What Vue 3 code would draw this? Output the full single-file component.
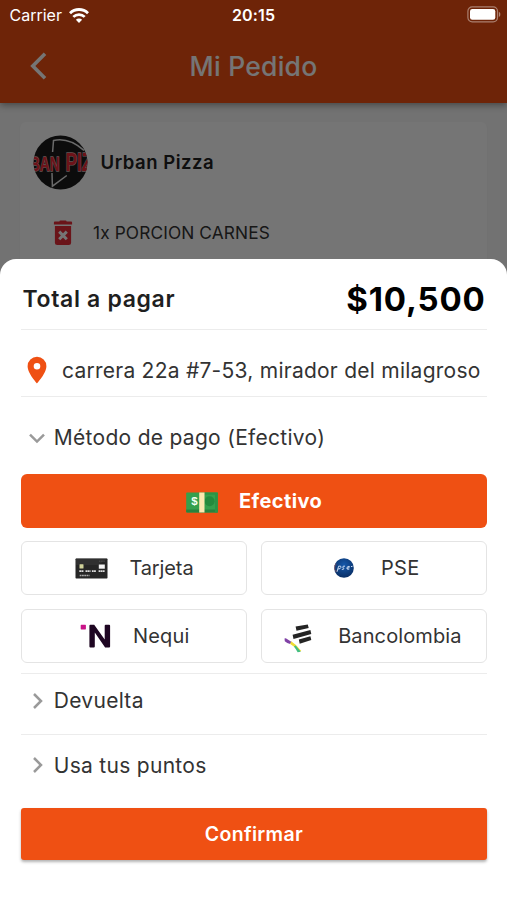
<script setup>
import { ref } from 'vue'

const methods = [
  { id: 'efectivo', label: 'Efectivo' },
  { id: 'tarjeta', label: 'Tarjeta' },
  { id: 'pse', label: 'PSE' },
  { id: 'nequi', label: 'Nequi' },
  { id: 'bancolombia', label: 'Bancolombia' }
]
const selected = ref('efectivo')
</script>

<template>
  <div class="screen">
    <header class="header">
      <div class="status">
        <div class="carrier">
          <span>Carrier</span>
          <svg class="wifi" viewBox="0 0 20 15" width="20" height="15">
            <path d="M10 14.9 6.9 11.7a4.4 4.4 0 0 1 6.2 0z" fill="#fff" />
            <path d="M4.3 8.9a8.1 8.1 0 0 1 11.4 0" fill="none" stroke="#fff" stroke-width="2.7" />
            <path d="M1 5.2a12.8 12.8 0 0 1 18 0" fill="none" stroke="#fff" stroke-width="2.8" />
          </svg>
        </div>
        <span class="time">20:15</span>
        <svg class="battery" viewBox="0 0 34 17" width="34" height="17">
          <rect x=".9" y=".9" width="29.6" height="15" rx="4.3" fill="none" stroke="#fff" stroke-opacity=".42" stroke-width="1.2" />
          <rect x="3" y="3" width="25.3" height="10.8" rx="2.3" fill="#fff" />
          <path d="M31.9 5.8c1.9.7 1.9 4.5 0 5.2z" fill="#fff" fill-opacity=".45" />
        </svg>
      </div>
      <div class="navbar">
        <svg class="back" viewBox="0 0 18 28" width="18" height="28">
          <path d="M16 1.8 3.8 14 16 26.2" fill="none" stroke="#fff" stroke-width="3.6" />
        </svg>
        <h1>Mi Pedido</h1>
        <span class="spacer"></span>
      </div>
    </header>

    <main class="content">
      <section class="order">
        <div class="shop">
          <svg class="logo" viewBox="0 0 55 55" width="55" height="55">
            <defs><clipPath id="disc"><circle cx="27.5" cy="27.5" r="27" /></clipPath></defs>
            <g clip-path="url(#disc)">
              <rect width="55" height="55" fill="#1c1c1c" />
              <path d="M19.6 17 20.5 5.6q15-3.6 30.5 9.8M19 38l.4 13.2L33.8 40.5" fill="none" stroke="#e6e6e6" stroke-width="1.5" />
              <text x="-3" y="35.6" textLength="29.5" lengthAdjust="spacingAndGlyphs" class="brand">BAN</text>
              <text x="32.4" y="35.6" textLength="27" lengthAdjust="spacingAndGlyphs" class="brand big">PIZ</text>
            </g>
          </svg>
          <h2>Urban Pizza</h2>
        </div>
        <div class="item">
          <svg viewBox="0 0 20 26" width="20" height="26">
            <path d="M6.4 1.6Q6.4.6 7.4.6h5.2q1 0 1 1h4.6q.9 0 .9 1v1.8H.9V2.6q0-1 .9-1z" fill="#e62c38" />
            <path d="M1.9 6h16.2v16.5q0 2.5-2.5 2.5H4.4q-2.5 0-2.5-2.5z" fill="#e62c38" />
            <path d="m6.2 11.6 7.6 7.6m0-7.6-7.6 7.6" stroke="#fff" stroke-width="3" />
          </svg>
          <span>1x PORCION CARNES</span>
        </div>
      </section>
    </main>

    <div class="scrim">
      <section class="sheet">
        <div class="total">
          <h3>Total a pagar</h3>
          <strong>$10,500</strong>
        </div>
        <div class="address">
          <svg viewBox="0 0 20 28" width="20" height="28">
            <path fill-rule="evenodd" d="M10 .8A9.4 9.4 0 0 0 .6 10.2C.6 17.2 10 27.4 10 27.4s9.4-10.2 9.4-17.2A9.4 9.4 0 0 0 10 .8zm0 6.1a3.3 3.3 0 1 1 0 6.6 3.3 3.3 0 0 1 0-6.6z" fill="#ef5013" />
          </svg>
          <span>carrera 22a #7-53, mirador del milagroso</span>
        </div>
        <div class="fold open">
          <svg viewBox="0 0 18 18" width="18" height="18"><path d="m2 5.6 7 7 7-7" fill="none" stroke="#9a9a9a" stroke-width="2.5" /></svg>
          <span>Método de pago (Efectivo)</span>
        </div>
        <div class="methods">
          <button
            v-for="m in methods"
            :key="m.id"
            :class="['method', m.id, { active: m.id === selected }]"
            @click="selected = m.id"
          >
            <svg v-if="m.id === 'efectivo'" class="cash" viewBox="0 0 32 21" width="32" height="21">
              <rect x=".2" y=".5" width="31.6" height="20" rx=".8" fill="#35a04c" />
              <path d="M.2 17.5h31.6v2.2q0 .8-.8.8H1q-.8 0-.8-.8z" fill="#28823e" />
              <circle cx="23.6" cy="9.3" r="5" fill="#248b3d" />
              <path d="M18.5.5h13.3v2.3H18.5zM29 .5h2.8v20H29z" fill="#2c9345" />
              <rect x="13.2" y=".5" width="5.3" height="20" fill="#fbe8b0" />
              <text x="5.2" y="13.4" class="dollar">$</text>
            </svg>
            <svg v-else-if="m.id === 'tarjeta'" viewBox="0 0 33 21" width="33" height="21">
              <rect x=".5" y=".5" width="32" height="20" rx=".7" fill="#262626" />
              <path d="M1 .8h31L23 7H1z" fill="#303030" />
              <rect x="4.5" y="6.3" width="4" height="4.2" rx=".5" fill="#cfd29a" />
              <rect x="23.8" y="6.5" width="6" height="4.2" fill="#f4f4f4" />
              <path d="M24 3.2h6" stroke="#5a5a5a" stroke-width=".8" stroke-dasharray="1.4 .8" />
              <path d="M4.3 13.1h4.5m1.7 0h5m1.4 0h4.3m2.4 0h6" stroke="#dedede" stroke-width="1.8" stroke-dasharray="1.8 .35" />
              <path d="M4.7 17.6h9.8" stroke="#aaa" stroke-width="1.5" stroke-dasharray="1.8 .5" />
            </svg>
            <svg v-else-if="m.id === 'pse'" viewBox="0 0 20 20" width="20" height="20">
              <defs><radialGradient id="globe" cx=".5" cy=".35" r=".7"><stop offset="0" stop-color="#1659ab" /><stop offset="1" stop-color="#082b60" /></radialGradient></defs>
              <circle cx="10" cy="10" r="9.8" fill="url(#globe)" />
              <path d="m3 13.8 1.6-5.6q2.8-.7 2.4 1.1-.4 1.8-3 1.7m7-2.8q-2.4-.5-2.2.9.1 1.1 1.1 1.3.5 1.1-2.1 1m5-1q3.2-.4 2.6-2-2-.6-2.5 1.6 0 2.1 2.5 1m1.6-2.4 1.5-.3" fill="none" stroke="#c9daf2" stroke-width="1" />
              <path d="M.7 7v5M1.8 5.5v2M1.9 12v2" stroke="#8a5b65" stroke-width=".8" />
            </svg>
            <svg v-else-if="m.id === 'nequi'" viewBox="0 0 31 24" width="31" height="24">
              <rect x=".7" y=".8" width="5.2" height="4.6" rx=".6" fill="#c91488" />
              <path d="M9.4 1.8q0-1 1-1h3.8l10.5 14.7V1.8q0-1 1-1h3.4q1 0 1 1v20.6q0 1-1 1h-4L14.8 8.6v13.8q0 1-1 1h-3.4q-1 0-1-1z" fill="#1e0622" />
            </svg>
            <svg v-else class="bars" viewBox="0 0 28 29" width="28" height="29">
              <path d="m11.6 2.5 12.2-2 .9 3.6-12.2 2.6zM8.6 10.8 26.4 6l.9 3.9-17.8 5.2zM14.8 15.6l11.6-3.4.9 3.9-11.6 3.7z" fill="#242424" />
              <path d="m.5 14.6 1.3-.4 5.9 3.7-1.5 2.2q-3.2-1-5.4-2.9z" fill="#8042a6" />
              <path d="M7.1 17.3q5.7 3.4 10.2 9.8l-2.4.6q-3.5-4.7-8.7-7.6z" fill="#f0dc32" />
              <path d="m9.9 22.4 1.8-.8 5.1 6.2-3.2.5q-1.3-3-3.7-5.9z" fill="#42be82" />
            </svg>
            <span>{{ m.label }}</span>
          </button>
        </div>
        <div class="fold returned">
          <svg viewBox="0 0 18 18" width="18" height="18"><path d="m6 2 7 7-7 7" fill="none" stroke="#9a9a9a" stroke-width="2.5" /></svg>
          <span>Devuelta</span>
        </div>
        <div class="fold points">
          <svg viewBox="0 0 18 18" width="18" height="18"><path d="m6 2 7 7-7 7" fill="none" stroke="#9a9a9a" stroke-width="2.5" /></svg>
          <span>Usa tus puntos</span>
        </div>
        <button class="confirm">Confirmar</button>
      </section>
    </div>
  </div>
</template>

<style>
body {
  margin: 0;
}
</style>

<style scoped>
* {
  box-sizing: border-box;
}
.screen {
  position: relative;
  width: 507px;
  height: 900px;
  overflow: hidden;
  background: #f8f8f8;
  font-family: Inter, "Liberation Sans", sans-serif;
  white-space: nowrap;
}
h1, h2, h3 {
  margin: 0;
}
svg {
  display: block;
  flex: none;
}
button {
  font-family: inherit;
  padding: 0;
}
.header {
  height: 103px;
  background: #ef5013;
  box-shadow: 0 2px 7px rgba(0, 0, 0, 0.4);
}
.status {
  position: relative;
  z-index: 2;
  display: grid;
  grid-template-columns: 1fr auto 1fr;
  align-items: center;
  height: 30px;
  padding: 0 8px;
  color: #fff;
  font-size: 16px;
}
.carrier {
  display: flex;
  align-items: center;
  gap: 7px;
  padding-left: 1.5px;
}
.time {
  font-weight: 600;
  letter-spacing: 0.15px;
}
.battery {
  justify-self: end;
  margin: -2px -1.5px 0 0;
}
.navbar {
  display: flex;
  align-items: center;
  justify-content: space-between;
  height: 71.5px;
  padding: 0 30px 0 29px;
  color: #fff;
}
.navbar h1 {
  padding-left: 1px;
  font-size: 26.5px;
  font-weight: 500;
  letter-spacing: 0.25px;
}
.spacer {
  width: 18px;
}
.content {
  padding: 19px 20px 0;
}
.order {
  height: 170px;
  padding: 13px 12.5px;
  background: #fff;
  border-radius: 6px;
  box-shadow: 0 1px 1px rgba(0, 0, 0, 0.1);
}
.shop {
  display: flex;
  align-items: center;
  gap: 13px;
}
.shop h2 {
  margin-top: -1px;
  font-size: 18.5px;
  font-weight: 600;
  letter-spacing: 0.52px;
  color: #222;
}
.brand {
  font: 700 21px "Liberation Sans", sans-serif;
  fill: #ee2a38;
  stroke: #d8b8b8;
  stroke-width: 1.3px;
  paint-order: stroke;
}
.big {
  font-size: 26px;
}
.dollar {
  font: 700 11.5px "Liberation Sans", sans-serif;
  fill: #f2fff2;
}
.cash {
  margin-top: 3px;
}
.bars {
  margin-top: 6px;
}
.item {
  display: flex;
  align-items: center;
  gap: 20px;
  height: 26px;
  margin-top: 29.5px;
  padding-left: 20.5px;
  font-size: 17.3px;
  letter-spacing: 0.12px;
  color: #333;
}
.scrim {
  position: absolute;
  inset: 0;
  z-index: 1;
  display: flex;
  flex-direction: column;
  justify-content: flex-end;
  background: rgba(0, 0, 0, 0.54);
}
.sheet {
  height: 641.5px;
  padding: 0 20.5px 0 21.3px;
  border-radius: 16px 16px 0 0;
  background: #fff;
  color: #333;
}
.total {
  display: flex;
  align-items: center;
  justify-content: space-between;
  height: 71.5px;
  padding: 10.5px 1px 0 1.2px;
  border-bottom: 1px solid #ececec;
}
.total h3 {
  font-size: 23px;
  font-weight: 600;
  letter-spacing: 0.66px;
  color: #1f1f1f;
}
.total strong {
  font-size: 33px;
  font-weight: 700;
  letter-spacing: 0.8px;
  color: #000;
}
.address {
  display: flex;
  align-items: center;
  gap: 14.5px;
  height: 67px;
  padding: 14px 0 0 6.2px;
  border-bottom: 1px solid #ececec;
  font-size: 21px;
  letter-spacing: 0.25px;
}
.fold {
  display: flex;
  align-items: center;
  gap: 7.3px;
  padding-left: 7.2px;
  font-size: 21px;
  letter-spacing: 0.29px;
}
.open {
  height: 77px;
  padding-top: 4px;
}
.methods {
  display: grid;
  grid-template-columns: 1fr 1fr;
  grid-auto-rows: 53.8px;
  gap: 13.6px;
  height: 199px;
}
.method {
  display: flex;
  align-items: center;
  justify-content: center;
  border: 1.5px solid #e4e4e4;
  border-radius: 6px;
  background: #fff;
  font-size: 20px;
  color: #333;
}
.method.active {
  grid-column: 1 / -1;
  gap: 21.5px;
  border: 0;
  background: #ef5013;
  color: #fff;
  font-weight: 700;
  letter-spacing: 0.4px;
}
.tarjeta {
  gap: 21.5px;
  letter-spacing: -0.11px;
}
.pse {
  gap: 27.3px;
  padding-left: 6px;
  letter-spacing: 0.3px;
}
.nequi {
  gap: 22px;
  padding-left: 1px;
  letter-spacing: 0.17px;
}
.bancolombia {
  gap: 26.5px;
  padding-right: 2px;
  letter-spacing: 0.1px;
}
.returned {
  height: 61.5px;
  padding-bottom: 6px;
  border-top: 1px solid #ececec;
  border-bottom: 1px solid #ececec;
}
.points {
  height: 73.5px;
  padding-bottom: 12.5px;
}
.confirm {
  display: block;
  width: 100%;
  height: 51.5px;
  border: 0;
  border-radius: 3px;
  background: #ef5013;
  box-shadow: 0 2px 3px rgba(0, 0, 0, 0.3);
  color: #fff;
  font-size: 19.5px;
  font-weight: 600;
  letter-spacing: 0.3px;
}
</style>
